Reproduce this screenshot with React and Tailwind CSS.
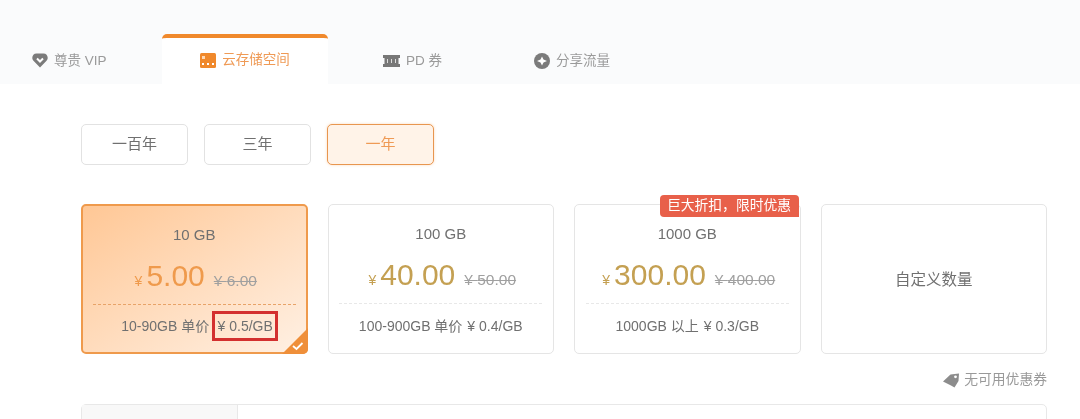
const font = "font-['Liberation_Sans','Noto_Sans_CJK_SC',sans-serif]";

function Heart() {
  return (
    <svg width="16" height="15" viewBox="0 0 16 15">
      <path d="M4.500 .5h7c2.600 0 4.200 2 4.200 4.300 0 1.300-.5 2.300-1.400 3.200L8 14.500 1.700 8C.8 7.100.3 6.100.3 4.800.3 2.500 1.900.5 4.500.5z" fill="#7b7b7b" />
      <path d="M5 5.500l3 3 3-3" fill="none" stroke="#fff" strokeWidth="2" />
    </svg>
  );
}
function Storage() {
  return (
    <svg width="16" height="15" viewBox="0 0 16 15">
      <rect width="16" height="15" rx="1.500" fill="#f0892c" />
      <rect x="2" y="3" width="3" height="3" fill="#ffd9b5" />
      <rect x="2" y="10" width="2" height="2" fill="#fff" />
      <rect x="7" y="10" width="2" height="2" fill="#fff" />
      <rect x="12" y="10" width="2" height="2" fill="#fff" />
    </svg>
  );
}
function Ticket() {
  return (
    <svg width="17" height="12" viewBox="0 0 17 12">
      <path d="M0 0h17v3H15.500v6H17v3H0V9h1.500V3H0z" fill="#777" />
      <path d="M4.500 4v4M8.500 4v4M12.500 4v4" stroke="#ddd" strokeWidth="1" />
    </svg>
  );
}
function Share() {
  return (
    <svg width="16" height="16" viewBox="0 0 16 16">
      <circle cx="8" cy="8" r="8" fill="#7b7b7b" />
      <path d="M8 3.500l1.500 3 3.500 1.500-3.500 1.500-1.500 3-1.500-3L3 8l3.500-1.500z" fill="#fff" />
    </svg>
  );
}
function Tag() {
  return (
    <svg width="17" height="15" viewBox="0 0 17 15">
      <path d="M0 8.500L7.500 1.500 16 0.500 15.500 8 11.500 14.500 8 12.500z" fill="#8c8c8c" />
      <circle cx="12.500" cy="3.800" r="1.400" fill="#fff" />
    </svg>
  );
}

function Tab({ icon, label, active, className }) {
  return (
    <div className={`flex h-[50px] items-center gap-[6px] ${className} ${active ? "rounded-t-[5px] border-t-4 border-[#f0892c] bg-white pb-[2px] text-[#ef9a55]" : "pt-[3px] text-[#9a9a9a]"}`}>
      {icon}
      <span className="text-[13.5px] leading-none">{label}</span>
    </div>
  );
}

function YearButton({ label, active }) {
  return (
    <div className={`flex h-[41px] w-[107px] items-center justify-center rounded-[5px] border text-[15px] ${active ? "border-[#e8964f] bg-[#fff3e8] text-[#ef9a55] shadow-[0_0_3px_rgba(240,150,70,0.35)]" : "border-[#e2e2e2] bg-white text-[#707070]"}`}>
      {label}
    </div>
  );
}

function Card({ size, price, old, unitLabel, unit, active, badge }) {
  const priceColor = active ? "text-[#ef9a4c]" : "text-[#c4a052]";
  return (
    <div className={`relative flex h-[150px] flex-col items-center rounded-[5px] border ${active ? "border-2 border-[#ef9a4c] bg-gradient-to-br from-[#ffc795] to-[#fff0e3]" : "border-[#e5e5e5] bg-white"}`}>
      {badge && (
        <div className="absolute -top-[10px] right-[1px] flex h-[22px] w-[139px] items-center justify-center rounded-t-[4px] rounded-bl-[4px] bg-[#e8604a] text-[13.8px] text-white">
          {badge}
        </div>
      )}
      <div className="mt-[21px] text-[15px] leading-[16px] text-[#707070]">{size}</div>
      <div className="mt-[18px] ml-[3px] flex items-baseline justify-center leading-none">
        <span className={`mr-[4px] text-[14px] ${priceColor}`}>¥</span>
        <span className={`text-[30px] ${priceColor}`}>{price}</span>
        <span className="ml-[9px] text-[15.5px] text-[#a0a0a0] line-through">¥ {old}</span>
      </div>
      <div className={`mx-auto mt-[13px] h-0 w-[203px] border-t border-dashed ${active ? "border-[#e8a368]" : "border-[#e8e8e8]"}`} />
      <div className={`mt-[6px] flex h-[30px] items-center text-[14px] leading-none text-[#707070] ${active ? "ml-[11px] gap-[3px]" : "gap-[5px] pt-[2px]"}`}>
        <span>{unitLabel}</span>
        {active ? (
          <span className="flex h-[30px] w-[66px] items-center justify-center border-[3px] border-[#d3302f]">¥ 0.5/GB</span>
        ) : (
          <span>{unit}</span>
        )}
      </div>
      {active && (
        <svg className="absolute -right-[2px] -bottom-[2px]" width="26" height="26" viewBox="0 0 26 26">
          <path d="M26 0V21a5 5 0 0 1-5 5H0z" fill="#ef8f3a" />
          <path d="M11 18l3.500 3L20.500 15" fill="none" stroke="#fff" strokeWidth="1.800" />
        </svg>
      )}
    </div>
  );
}

export default function App() {
  return (
    <div className={`h-[419px] w-[1080px] overflow-hidden bg-white blur-[0.5px] ${font}`}>
      <div className="h-[34px] bg-[#fafbfc]" />
      <div className="flex h-[50px] bg-[#fafbfc]">
        <Tab icon={<Heart />} label="尊贵 VIP" className="w-[162px] pl-[32px]" />
        <Tab icon={<Storage />} label="云存储空间" active className="w-[166px] justify-center" />
        <Tab icon={<Ticket />} label="PD 券" className="w-[206px] pl-[55px]" />
        <Tab icon={<Share />} label="分享流量" className="flex-1" />
      </div>
      <div className="px-[81px] pt-[40px]">
        <div className="flex gap-[16px]">
          <YearButton label="一百年" />
          <YearButton label="三年" />
          <YearButton label="一年" active />
        </div>
        <div className="mt-[39px] grid w-[966px] grid-cols-4 gap-[20px]">
          <Card active size="10 GB" price="5.00" old="6.00" unitLabel="10-90GB 单价" />
          <Card size="100 GB" price="40.00" old="50.00" unitLabel="100-900GB 单价" unit="¥ 0.4/GB" />
          <Card size="1000 GB" price="300.00" old="400.00" unitLabel="1000GB 以上" unit="¥ 0.3/GB" badge="巨大折扣，限时优惠" />
          <div className="flex h-[150px] items-center justify-center rounded-[5px] border border-[#e5e5e5] pt-[2px] text-[15.5px] text-[#707070]">自定义数量</div>
        </div>
        <div className="mt-[17px] flex h-[18px] w-[966px] items-center justify-end gap-[4px] text-[13.8px] text-[#999]">
          <Tag />
          <span>无可用优惠券</span>
        </div>
        <div className="mt-[15px] flex h-[40px] w-[966px] rounded-t-[5px] border border-[#e8e8e8]">
          <div className="w-[156px] border-r border-[#e8e8e8] bg-[#f8f8f8]" />
        </div>
      </div>
    </div>
  );
}
